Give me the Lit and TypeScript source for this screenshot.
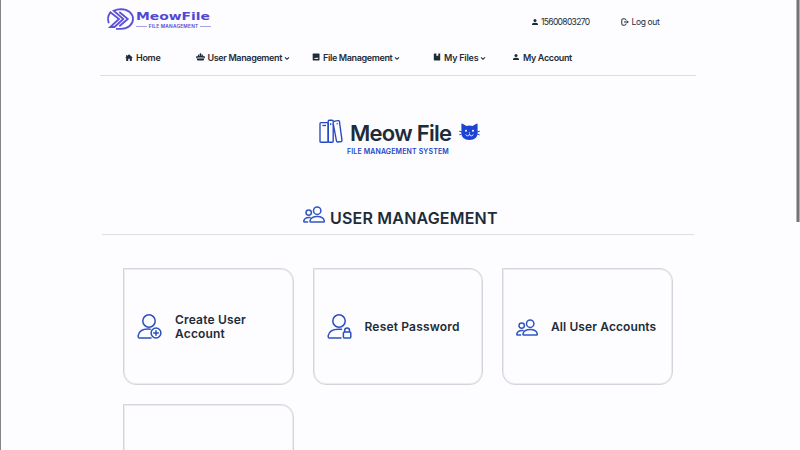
import { LitElement, html, css, svg, nothing } from "lit";
import { customElement, property } from "lit/decorators.js";

const line = (body: unknown) => svg`<g fill="none" stroke="currentColor" stroke-width="1.5" stroke-linecap="round" stroke-linejoin="round">${body}</g>`;

const icons: Record<string, { box: string; body: unknown }> = {
  user: { box: "0 0 8 8", body: svg`<circle cx="4" cy="2.5" r="1.5"/><path d="M1 6.9V6.1Q1.2 4.8 4 4.8T7 6.1V6.9Z"/>` },
  logout: { box: "0 0 8 8", body: svg`<path d="M4.8 2.3V1.8Q4.8.8 3.8.8H1.8Q.8.8.8 1.8V6.2Q.8 7.2 1.8 7.2H3.8Q4.8 7.2 4.8 6.2V5.7M3 4H7.2M5.8 2.6 7.2 4 5.8 5.4" fill="none" stroke="currentColor" stroke-width="1"/>` },
  home: { box: "0 0 8 8", body: svg`<path d="M4 .3 7.9 3.8H6.8V6.9H4.8V4.8H3.2V6.9H1.2V3.8H.1L1.2 2.8V.9H2.2V1.9Z"/>` },
  robot: { box: "0 0 9 8", body: svg`<path d="M4 .3H5V1.5H6.6L7.4 3.2H8.8V5.2H.2V3.2H1.6L2.4 1.5H4Z"/><path d="M1 5.5H8V6.7Q8 7.5 7.2 7.5H1.8Q1 7.5 1 6.7Z"/><path d="M3 2.5H4M5.2 2.5H6.2M1.4 4.6H7.6" stroke="#fdfcfe" stroke-width=".55"/>` },
  image: { box: "0 0 8 8", body: svg`<rect x=".7" y=".6" width="6.8" height="6.8" rx=".6"/><path d="M2 6 3.2 4.8 4 5.5 5.1 4.3 6.4 6Z" fill="#fdfcfe"/>` },
  book: { box: "0 0 8 8", body: svg`<path d="M1.6.6H3.4V3.2L4.4 2.5 5.3 3.2V.6H7.2V7.5H1.6Q.8 7.5.8 6.7V1.4Q.8.6 1.6.6Z"/>` },
  down: { box: "0 0 6 5", body: svg`<path d="M1 1.4 3 3.3 5 1.4" fill="none" stroke="currentColor" stroke-width="1.1"/>` },
  brand: {
    box: "0 0 27 22",
    body: svg`<g fill="none" stroke="#5a50d6" stroke-width="1.8" stroke-linejoin="miter">
      <path d="M1.8 15.2Q-.4 9.5 3.4 4.3L12 11 3.2 19H7.5L16.3 11 6.7 2.8Q10 1.3 14 1.2C21 1.2 26 5.5 26 11S21 20.8 14 20.8H9M12.3 4 20.8 11 12.3 18.2"/></g>`,
  },
  books: {
    box: "0 0 24 25",
    body: svg`<g fill="none" stroke="currentColor" stroke-width="1.35" stroke-linejoin="round">
      <rect x="1" y="3.6" width="8.2" height="19.6" rx="1"/><path d="M3.4 6.5H7"/>
      <rect x="9.2" y="1.2" width="5" height="22" rx="1"/><path d="M11.7 4.2V6M15 3.2Q14.8 2.3 15.7 2.1L19.3 1.6Q20.2 1.5 20.4 2.4L23 21.3Q23.1 22.3 22.2 22.5L18.6 23Q17.7 23 17.5 22.1L14.3 5M17.6 4.8 18.8 4.6"/></g>`,
  },
  cat: {
    box: "0 0 21 18",
    body: svg`<path d="M2.4 1.6Q2.4.2 3.6.8L7.4 2.9Q10.5 2.2 13.6 2.9L17.4.8Q18.6.2 18.6 1.6V9.5Q18.6 17 10.5 17T2.4 9.5Z"/>
      <path d="M.2 8.2 3 9M.4 11.8 3 10.9M20.8 8.2 18 9M20.6 11.8 18 10.9" stroke="currentColor" stroke-width="1"/>
      <circle cx="7" cy="7.8" r="1" fill="#fff"/><circle cx="14" cy="7.8" r="1" fill="#fff"/>
      <path d="M9.6 9.6H11.4L10.5 10.7Z" fill="#fff"/><path d="M6.8 11.3Q7.1 13 8.8 12.9 10.3 12.7 10.5 11 10.7 12.7 12.2 12.9 13.9 13 14.2 11.3" fill="none" stroke="#fff" stroke-width=".8"/>`,
  },
  people: {
    box: "0 0 22 17",
    body: line(svg`<circle cx="14.2" cy="4.7" r="3.7"/><path d="M8 16Q6.8 16 7 14.8 8 10.6 14.2 10.6T21.3 14.8Q21.5 16 20.3 16Z"/><circle cx="5.7" cy="6.6" r="2.7"/><path d="M4.6 16H1.7Q.7 16 .8 15 1.4 11.6 5.8 11.4L7 11.5"/>`),
  },
  add: {
    box: "0 0 25 25",
    body: line(svg`<circle cx="12" cy="7" r="6.2"/><path d="M13.2 15.2Q2.5 14.4 1.2 21.6.9 24 2.6 24H14"/><circle cx="19" cy="19" r="4.9"/><path d="M19 16.7V21.3M16.7 19H21.3"/>`),
  },
  lock: {
    box: "0 0 25 25",
    body: line(svg`<circle cx="12" cy="7" r="6.2"/><path d="M14.5 15.3Q2.5 14.2 1.2 21.6.9 24 2.6 24H14"/><rect x="16.4" y="17.9" width="7.4" height="6.1" rx="1"/><path d="M17.7 17.7V16.3A2.4 2.4 0 0 1 22.5 16.3V17.7"/>`),
  },
};

@customElement("line-icon")
class LineIcon extends LitElement {
  @property() name = "user";
  static styles = css`
    :host { display: block; flex: none; }
    svg { display: block; width: 100%; height: 100%; fill: currentColor; overflow: visible; }
  `;
  render() {
    const i = icons[this.name];
    return html`<svg viewBox=${i.box} preserveAspectRatio="none">${i.body}</svg>`;
  }
}

@customElement("app-root")
class AppRoot extends LitElement {
  static styles = css`
    :host {
      display: block; box-sizing: border-box; width: 800px; height: 450px; overflow: hidden; position: relative;
      background: #fdfcfe; color: #1d2c38; border-left: 1px solid #858587;
      font-family: Inter, "Liberation Sans", sans-serif;
    }
    * { box-sizing: border-box; }
    header { width: 596px; height: 76px; margin-left: 99px; border-bottom: 1px solid #dedee4; }
    .top { height: 43px; display: flex; padding-left: 7px; }
    .brand { display: flex; width: 423.5px; padding-top: 8px; flex: none; }
    .mark { width: 27px; height: 22px; }
    .words { margin-left: 2px; width: 75px; color: #5148d4; }
    .word { display: block; width: 60px; font: 700 11.2px/13px "DejaVu Sans", sans-serif; white-space: nowrap; margin-top: 2px; transform: scaleX(1.24); transform-origin: 0 50%; }
    .tag { display: flex; align-items: center; gap: 2px; font-size: 4.8px; line-height: 5px; font-weight: 600; white-space: nowrap; letter-spacing: 0.22px; margin-top: 0.5px; }
    .tag::before, .tag::after { content: ""; height: 1px; flex: 1; background: #a7a2ea; }
    .meta { display: flex; align-items: center; width: 90.5px; flex: none; height: 43px; font-size: 8.5px; gap: 2.5px; white-space: nowrap; }
    .phone { letter-spacing: -0.66px; }
    .out { letter-spacing: -0.35px; }
    .s { width: 8px; height: 8px; }
    .r { width: 9px; }
    nav { display: grid; grid-template-columns: 70.5px 116.5px 121px 79px 90px; padding-left: 25px; height: 29px; }
    .item { display: flex; align-items: center; height: 28px; font-size: 9px; font-weight: 590; gap: 3px; white-space: nowrap; letter-spacing: -0.36px; }
    .item:first-child { padding-top: 1px; letter-spacing: -0.3px; }
    .item:nth-child(3) { letter-spacing: -0.36px; }
    .item:nth-child(4) { letter-spacing: -0.22px; }
    .item:nth-child(5) { letter-spacing: -0.36px; }
    .d { width: 6px; height: 5px; margin: 2px 0 0 -1px; }
    .hero { width: 596px; margin-left: 99px; padding-top: 43px; height: 128px; }
    .title { display: flex; height: 27px; padding-left: 219px; }
    .books { width: 24px; height: 25px; color: #2448c2; }
    h1 { margin: 0; font-size: 22px; line-height: 28px; font-weight: 580; width: 109px; margin-left: 7px; white-space: nowrap; letter-spacing: -0.72px; }
    .cat { width: 21px; height: 18px; margin-top: 4px; color: #1c43d2; }
    .sub { margin: 1px 0 0 247px; font-size: 7px; line-height: 10px; font-weight: 600; color: #2448c8; white-space: nowrap; letter-spacing: 0.13px; }
    h2 { margin: 0 0 0 101px; width: 592px; height: 31px; border-bottom: 1px solid #dedee4; display: flex; padding-left: 201px; font-size: 16px; line-height: 28px; font-weight: 580; white-space: nowrap; letter-spacing: 0.2px; }
    .people { width: 22px; height: 17px; color: #3155c2; }
    h2 .people { margin: 2px 5px 0 0; }
    .cards { display: grid; grid-template-columns: repeat(3, 170.5px); column-gap: 19px; row-gap: 19px; margin: 33px 0 0 122px; }
    .card { height: 117px; border: 1px solid #d3d5dd; box-shadow: inset 0 0 0 1px #ebecf1; border-radius: 0 13px 13px 13px; display: flex; align-items: center; padding: 1px 0 0 13px; font-size: 12px; line-height: 14px; font-weight: 570; white-space: pre; letter-spacing: 0.18px; }
    .big { width: 25px; height: 25px; color: #2b50bd; margin: -1px 13px 0 0; }
    .card .people { margin-right: 13px; }
    .card:nth-child(3) { letter-spacing: 0.1px; }
    .thumb { position: absolute; right: 0; top: 0; width: 4px; height: 222px; background: #747476; border-left: 1px solid #b5b5b7; border-right: 1px solid #b0b0b2; }
  `;

  item(icon: string, text: string, menu = false, cls = "") {
    return html`<span class="item"><line-icon class="s ${cls}" name=${icon}></line-icon><span class="label">${text}</span>${menu ? html`<line-icon class="d" name="down"></line-icon>` : nothing}</span>`;
  }
  card(icon: string, text: string, cls = "big") {
    return html`<div class="card"><line-icon class=${cls} name=${icon}></line-icon><span class="label">${text}</span></div>`;
  }
  render() {
    return html`
      <header>
        <div class="top">
          <div class="brand"><line-icon class="mark" name="brand"></line-icon>
            <div class="words"><span class="word">MeowFile</span><span class="tag">FILE MANAGEMENT</span></div></div>
          <div class="meta"><line-icon class="s" name="user"></line-icon><span class="phone">15600803270</span></div>
          <div class="meta"><line-icon class="s" name="logout"></line-icon><span class="out">Log out</span></div>
        </div>
        <nav>${this.item("home", "Home")}${this.item("robot", "User Management", true, "r")}${this.item("image", "File Management", true)}${this.item("book", "My Files", true)}${this.item("user", "My Account")}</nav>
      </header>
      <section class="hero">
        <div class="title"><line-icon class="books" name="books"></line-icon><h1>Meow File</h1><line-icon class="cat" name="cat"></line-icon></div>
        <div class="sub">FILE MANAGEMENT SYSTEM</div>
      </section>
      <h2><line-icon class="people" name="people"></line-icon>USER MANAGEMENT</h2>
      <div class="cards">${this.card("add", "Create User\nAccount")}${this.card("lock", "Reset Password")}${this.card("people", "All User Accounts", "people")}<div class="card"></div></div>
      <div class="thumb"></div>`;
  }
}
